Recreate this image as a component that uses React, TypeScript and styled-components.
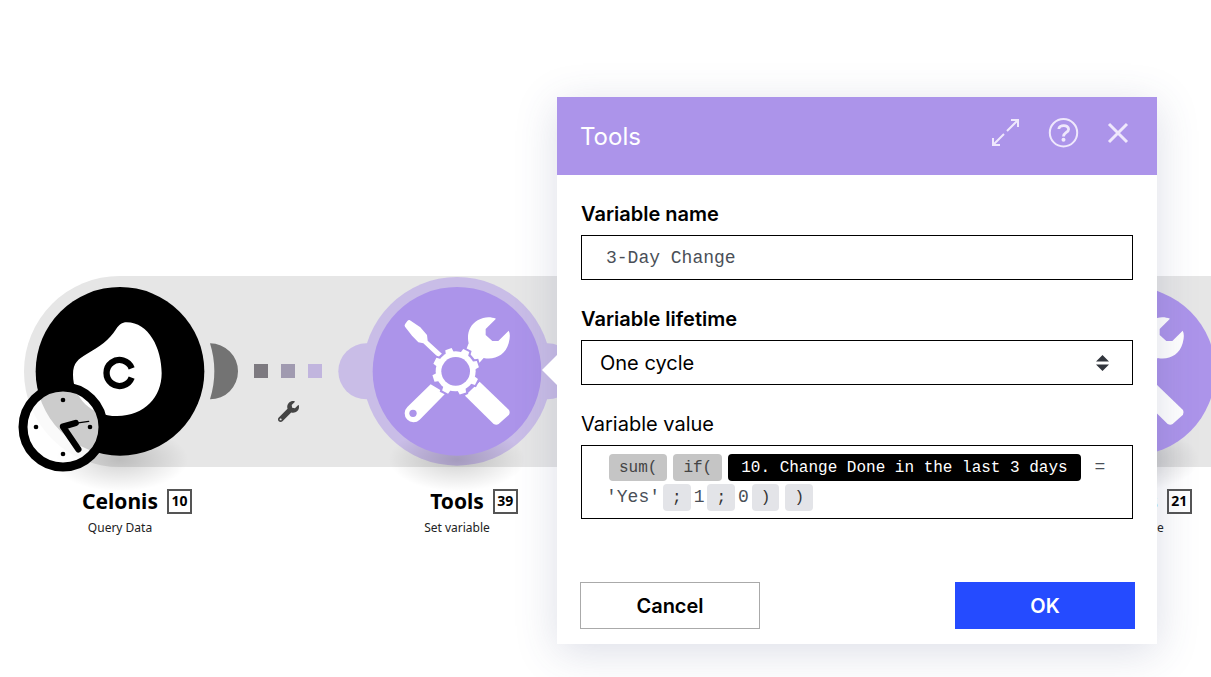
import React from "react";
import styled, { createGlobalStyle } from "styled-components";
import { FaWrench } from "react-icons/fa";

const GlobalStyle = createGlobalStyle`
  *, *::before, *::after { box-sizing: border-box; }
  body {
    margin: 0;
    background: #fff;
    color: #000;
    font-family: Inter, "Liberation Sans", sans-serif;
  }
`;

const LILAC = "#ac94ea";
const HALO = "#c9bde7";
const MONO = `"Liberation Mono", "Courier New", monospace`;

const Canvas = styled.main`
  position: relative;
  min-height: 100vh;
  overflow: hidden;
`;

const Track = styled.div`
  position: absolute;
  top: 276px;
  left: 24px;
  right: 0;
  height: 191px;
  border-radius: 96px 0 0 96px;
  background: #e6e6e6;
`;

/* ---------- diagram nodes ---------- */

const NodeBox = styled.section<{ $x: number }>`
  position: absolute;
  top: 276px;
  left: ${(p) => p.$x - 119}px;
  width: 238px;
  display: flex;
  flex-direction: column;
  align-items: center;
`;

const NodeArt = styled.svg`
  display: block;
  width: 238px;
  height: 212px;
  overflow: visible;
`;

const NodeTitle = styled.h2`
  align-self: stretch;
  display: grid;
  grid-template-columns: 1fr auto 1fr;
  align-items: center;
  column-gap: 9px;
  margin: 0;
  font: 700 21px/26px "Noto Sans", "Open Sans", sans-serif;
`;

const NodeNumber = styled.span`
  grid-column: 3;
  justify-self: start;
  width: 25px;
  height: 25px;
  border: 2px solid #555;
  background: #fff;
  font-size: 14px;
  line-height: 20px;
  text-align: center;
`;

const NodeName = styled.span`
  grid-column: 2;
`;

const NodeAction = styled.p`
  margin: 5px 0 0;
  font: 400 12px/18px "Noto Sans", "Open Sans", sans-serif;
  color: #222;
`;

const Link = styled.div`
  position: absolute;
  top: 364px;
  left: 254px;
  width: 68px;
  display: flex;
  flex-wrap: wrap;
  justify-content: center;
  gap: 23px 13px;
  color: #444;
`;

const Dash = styled.span<{ $color: string }>`
  width: 14px;
  height: 14px;
  background: ${(p) => p.$color};
`;

const Schedule = styled.svg`
  position: absolute;
  top: 382px;
  left: 18px;
  width: 90px;
  height: 90px;
`;

/* ---------- settings window ---------- */

const Dialog = styled.section`
  position: absolute;
  top: 97px;
  left: 557px;
  width: 600px;
  background: #fff;
  box-shadow: 0 8px 40px rgba(60, 72, 120, 0.18);
`;

const Pointer = styled.span`
  position: absolute;
  top: 258px;
  left: -15px;
  border: 15px solid transparent;
  border-left: 0;
  border-right-color: #fff;
`;

const Header = styled.header`
  display: flex;
  align-items: center;
  justify-content: space-between;
  height: 78px;
  padding: 0 24px 0 23px;
  background: ${LILAC};
  color: #fff;
`;

const Title = styled.h1`
  margin: 0;
  padding-top: 2px;
  font-size: 24px;
  font-weight: 400;
  line-height: 32px;
`;

const Actions = styled.div`
  display: flex;
  gap: 26px;
  padding-bottom: 6px;
`;

const IconButton = styled.button`
  width: 30px;
  height: 30px;
  padding: 0;
  border: 0;
  background: none;
  color: #efe8fc;
  svg {
    display: block;
    overflow: visible;
  }
`;

const Form = styled.form`
  display: flex;
  flex-direction: column;
  gap: 24px;
  padding: 24px 24px 15px;
`;

const Field = styled.div`
  display: flex;
  flex-direction: column;
  gap: 6px;
`;

const Label = styled.label<{ $plain?: boolean }>`
  font-size: 20px;
  font-weight: ${(p) => (p.$plain ? 400 : 600)};
  line-height: 30px;
`;

const TextInput = styled.input`
  height: 45px;
  padding: 0 24px;
  border: 1px solid #000;
  border-radius: 0;
  background: #fff;
  color: #4a4f57;
  font: 400 18px/24px ${MONO};
`;

const SelectBox = styled.div`
  display: grid;
  align-items: center;
  > * {
    grid-area: 1 / 1;
  }
  > svg {
    justify-self: end;
    margin-right: 24px;
    pointer-events: none;
  }
`;

const Select = styled.select`
  appearance: none;
  height: 45px;
  padding: 0 18px;
  border: 1px solid #000;
  border-radius: 0;
  background: #fff;
  color: #000;
  font: 400 20px/24px Inter, sans-serif;
`;

const Formula = styled.div`
  padding: 6px 18px 6px 24px;
  border: 1px solid #000;
  color: #4a4f57;
  font: 400 18px/30px ${MONO};
`;

const chipLook = {
  fn: "padding: 1px 10px 0; background: #c5c5c5; color: #444;",
  sep: "padding: 1px 9px 0; background: #e3e4e8; color: #333;",
  value: "padding: 1px 13px 0; background: #000; color: #fff;",
};

const Chip = styled.span<{ $kind: keyof typeof chipLook }>`
  display: inline-block;
  margin: 0 3px;
  border-radius: 4px;
  font-size: 16px;
  line-height: 26px;
  vertical-align: middle;
  ${(p) => chipLook[p.$kind]}
`;

const Footer = styled.footer`
  display: flex;
  justify-content: space-between;
  margin: 39px -2px 0 -1px;
`;

const Button = styled.button<{ $primary?: boolean }>`
  width: 180px;
  height: 47px;
  border: 1px solid ${(p) => (p.$primary ? "#254bff" : "#aaa")};
  background: ${(p) => (p.$primary ? "#254bff" : "#fff")};
  color: ${(p) => (p.$primary ? "#fff" : "#000")};
  font: 600 20px/24px Inter, sans-serif;
`;

/* Soft oval under each disc; art units are thirds of a pixel, centred on the disc. */
const Shadow = ({ id }: { id: string }) => (
  <>
    <defs>
      <radialGradient id={id}>
        <stop offset="0" stopColor="#000" stopOpacity="0.18" />
        <stop offset="0.5" stopColor="#000" stopOpacity="0.09" />
        <stop offset="1" stopColor="#000" stopOpacity="0" />
      </radialGradient>
    </defs>
    <ellipse cx="0" cy="264" rx="205" ry="96" fill={`url(#${id})`} />
  </>
);

const TEETH = [-108, -63, -18, 27, 72, 117, 162, 207];

const Teeth = () => (
  <>
    {TEETH.map((a) => (
      <path key={a} d="M54 -13 L70 -10 V10 L54 13 Z" transform={`rotate(${a})`} />
    ))}
  </>
);

const ToolsGlyph = () => (
  <g fill="#fff">
    <path d="M-149 -151 Q-144 -156 -139 -152 L-110 -132 L-90 -109 L-88 -92 L-42 -50 L-54 -40 L-101 -84 L-116 -87 L-135 -107 L-156 -134 Q-159 -138 -155 -143 Z" />
    <path d="M117 -158 L86 -127 V-109 L106 -91 H124 L155 -122 Q162 -110 155 -84 C145 -48 112 -33 80 -40 L66 -24 L20 -46 L35 -84 C28 -112 39 -140 62 -153 C82 -165 101 -164 117 -158 Z" />
    <path d="M-79 39 L-149 107 A26 26 0 0 0 -112 145 L-34 66 Z" />
    <circle cx="-132" cy="126" r="11" fill={LILAC} />
    <path d="M68 31 L156 116 Q160 124 156 130 L125 158 Q118 163 110 158 L24 73 Z" />
    <g transform="translate(-4 0)">
      <g fill={LILAC} stroke={LILAC} strokeWidth="12">
        <circle r="61" />
        <Teeth />
      </g>
      <circle r="60" />
      <Teeth />
      <circle r="43" fill={LILAC} />
    </g>
  </g>
);

const ToolsNode = ({ x, n, active }: { x: number; n: number; active?: boolean }) => (
  <NodeBox $x={x}>
    <NodeArt viewBox="-357 -286 714 636" aria-hidden="true">
      {active && (
        <g fill={HALO}>
          <circle r="283" />
          <circle cx="-272" r="84" />
          <circle cx="272" r="84" />
        </g>
      )}
      <Shadow id={`shade${n}`} />
      <circle r="253" fill={LILAC} />
      <ToolsGlyph />
    </NodeArt>
    <NodeTitle>
      <NodeName>Tools</NodeName>
      <NodeNumber>{n}</NodeNumber>
    </NodeTitle>
    <NodeAction>Set variable</NodeAction>
  </NodeBox>
);

const CelonisNode = () => (
  <NodeBox $x={120}>
    <NodeArt viewBox="-357 -286 714 636" aria-hidden="true">
      <path d="M270 -84 A84 84 0 0 1 270 84 A283 283 0 0 0 270 -84 Z" fill="#737373" />
      <Shadow id="shade10" />
      <circle r="253" fill="#000" />
      <path
        d="M20 -147 C86 -147 125 -69 125 6 C125 76 75 134 -9 134 C-86 134 -141 80 -141 10 C-141 -26 -124 -37 -101 -51 C-59 -75 -34 -92 -12 -126 C-3 -140 6 -147 20 -147 Z"
        fill="#fff"
      />
      <path d="M35 -9 A39 39 0 1 0 35 19" fill="none" stroke="#000" strokeWidth="19" />
    </NodeArt>
    <NodeTitle>
      <NodeName>Celonis</NodeName>
      <NodeNumber>10</NodeNumber>
    </NodeTitle>
    <NodeAction>Query Data</NodeAction>
  </NodeBox>
);

export default function App() {
  return (
    <>
      <GlobalStyle />
      <Canvas>
        <Track />
        <CelonisNode />
        <Schedule viewBox="-135 -135 270 270" aria-hidden="true">
          <circle r="120" fill="#fff" fillOpacity="0.8" stroke="#000" strokeWidth="27" />
          <circle cy="-81" r="7" />
          <circle cx="81" r="7" />
          <circle cy="81" r="7" />
          <circle cx="-81" r="7" />
          <g fill="none" stroke="#000" strokeLinecap="round" strokeLinejoin="round">
            <path d="M38 -12 L0 -1 L46 67" strokeWidth="19" />
            <path d="M30 -10 L77 -17" strokeWidth="4" />
          </g>
        </Schedule>
        <Link>
          <Dash $color="#7d7a80" />
          <Dash $color="#a09ab0" />
          <Dash $color="#c1b5de" />
          <FaWrench size={21} aria-hidden="true" />
        </Link>
        <ToolsNode x={457} n={39} active />
        <ToolsNode x={1131} n={21} />

        <Dialog role="dialog" aria-labelledby="dialog-title">
          <Pointer />
          <Header>
            <Title id="dialog-title">Tools</Title>
            <Actions>
              <IconButton type="button" aria-label="Expand">
                <svg width="30" height="30" fill="none" stroke="currentColor" strokeWidth="2">
                  <path d="M16 13 L27 2 M20 2 H27 V9 M13 16 L2 27 M2 20 V27 H9" />
                </svg>
              </IconButton>
              <IconButton type="button" aria-label="Help">
                <svg width="30" height="30" fill="none" stroke="currentColor" strokeWidth="2">
                  <circle cx="16.5" cy="14.7" r="13.7" />
                  <path d="M11.8 11 C12 6.8 21.5 6.2 21.6 11.2 C21.6 14.6 16.5 14.4 16.5 18.6" strokeWidth="2.8" />
                  <circle cx="16.5" cy="21.8" r="2" fill="currentColor" stroke="none" />
                </svg>
              </IconButton>
              <IconButton type="button" aria-label="Close">
                <svg width="30" height="30" fill="none" stroke="currentColor" strokeWidth="3">
                  <path d="M6 6 L24 24 M24 6 L6 24" />
                </svg>
              </IconButton>
            </Actions>
          </Header>
          <Form onSubmit={(e) => e.preventDefault()}>
            <Field>
              <Label htmlFor="name">Variable name</Label>
              <TextInput id="name" type="text" defaultValue="3-Day Change" />
            </Field>
            <Field>
              <Label htmlFor="lifetime">Variable lifetime</Label>
              <SelectBox>
                <Select id="lifetime" defaultValue="cycle">
                  <option value="cycle">One cycle</option>
                  <option value="execution">One execution</option>
                </Select>
                <svg width="13" height="16" fill="#32363d" aria-hidden="true">
                  <path d="M6.5 0 L13 6.5 H0 Z M6.5 16 L0 9.5 H13 Z" />
                </svg>
              </SelectBox>
            </Field>
            <Field>
              <Label as="span" id="value-label" $plain>
                Variable value
              </Label>
              <Formula
                role="textbox"
                aria-labelledby="value-label"
                contentEditable
                suppressContentEditableWarning
                spellCheck={false}
              >
                <Chip $kind="fn">sum(</Chip>
                <Chip $kind="fn">if(</Chip>
                <Chip $kind="value">10. Change Done in the last 3 days</Chip>
                <span>{" = "}</span>
                <span>'Yes'</span>
                <Chip $kind="sep">;</Chip>1<Chip $kind="sep">;</Chip>0<Chip $kind="sep">)</Chip>
                <Chip $kind="sep">)</Chip>
              </Formula>
            </Field>
            <Footer>
              <Button type="button">Cancel</Button>
              <Button type="submit" $primary>
                OK
              </Button>
            </Footer>
          </Form>
        </Dialog>
      </Canvas>
    </>
  );
}
